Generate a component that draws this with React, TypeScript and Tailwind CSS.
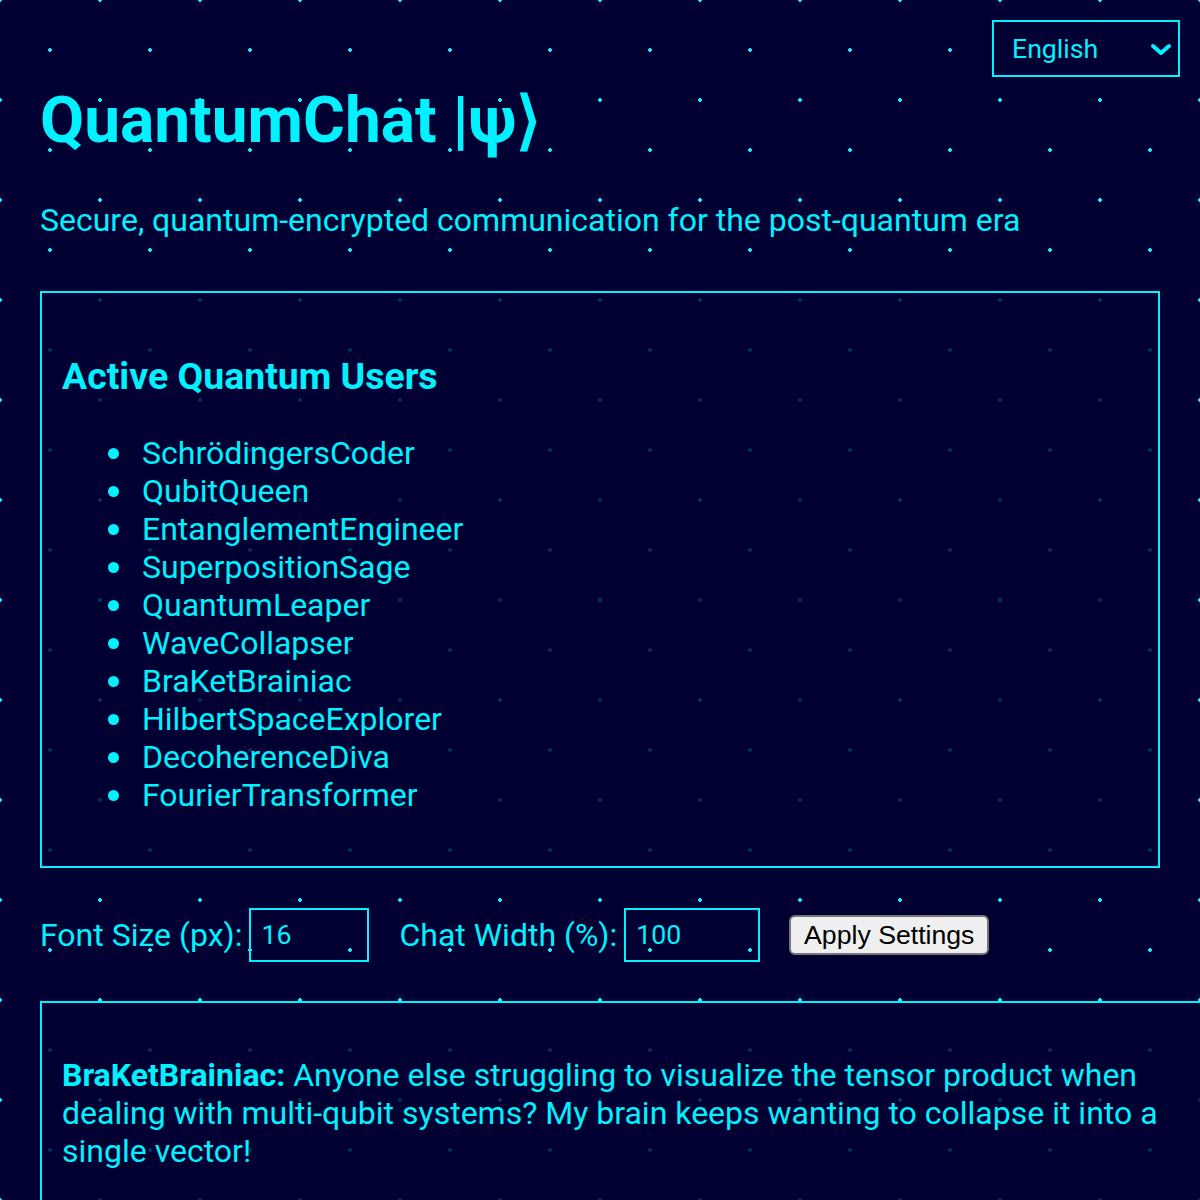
import React from 'react';

const users = [
  'SchrödingersCoder',
  'QubitQueen',
  'EntanglementEngineer',
  'SuperpositionSage',
  'QuantumLeaper',
  'WaveCollapser',
  'BraKetBrainiac',
  'HilbertSpaceExplorer',
  'DecoherenceDiva',
  'FourierTransformer',
];

export default function App() {
  return (
    <div className="relative min-h-screen overflow-x-hidden bg-[#000033] bg-[image:radial-gradient(circle,#18eaff_1.8px,transparent_2px),radial-gradient(circle,#18eaff_1.8px,transparent_2px)] bg-[size:100px_100px] bg-[position:0_0,50px_50px] px-[40px] pt-[40px] font-['Roboto',sans-serif] text-[#00f2ff]">
      {/* Language picker */}
      <div className="absolute right-[20px] top-[20px]">
        <div className="relative">
          <select className="h-[57px] w-[188px] appearance-none border-2 border-[#00f2ff] bg-[#000033] pl-[18px] text-[26.67px] text-[#00f2ff] outline-none">
            <option>English</option>
          </select>
          <svg
            className="pointer-events-none absolute right-[8px] top-[23px]"
            width="22"
            height="14"
            viewBox="0 0 22 14"
            fill="none"
          >
            <polyline points="3,3 11,10 19,3" stroke="#00f2ff" strokeWidth="4" strokeLinecap="round" strokeLinejoin="round" />
          </svg>
        </div>
      </div>

      {/* Header */}
      <h1 className="mt-[43px] text-[64px] font-bold leading-[75px]">QuantumChat |ψ⟩</h1>
      <p className="mt-[43px] text-[32px] leading-[38px]">
        Secure, quantum-encrypted communication for the post-quantum era
      </p>

      {/* Users panel */}
      <div className="mt-[52px] border-2 border-[#00f2ff] bg-[#000033]/80 p-[20px]">
        <h3 className="mt-[41px] text-[37.44px] font-bold leading-[44px]">Active Quantum Users</h3>
        <ul className="mb-[32px] mt-[36px] pl-[46px] text-[32px] leading-[38px]">
          {users.map((u) => (
            <li key={u} className="flex items-center">
              <span className="mr-[23px] h-[11px] w-[11px] rounded-full bg-[#00f2ff]" />
              {u}
            </li>
          ))}
        </ul>
      </div>

      {/* Settings */}
      <div className="mt-[40px] flex items-center text-[32px] leading-[38px]">
        <label className="flex items-center gap-[7px]">
          Font Size (px):
          <input
            defaultValue="16"
            className="h-[54px] w-[120px] border-2 border-[#00f2ff] bg-transparent px-[10px] text-[26.67px] text-[#00f2ff] outline-none"
          />
        </label>
        <label className="ml-[30px] flex items-center gap-[7px]">
          Chat Width (%):
          <input
            defaultValue="100"
            className="h-[54px] w-[136px] border-2 border-[#00f2ff] bg-transparent px-[10px] text-[26.67px] text-[#00f2ff] outline-none"
          />
        </label>
        <button className="ml-[29px] h-[40px] w-[200px] rounded-[6px] border-2 border-[#767676] bg-[#efefef] font-['Liberation_Sans',Arial,sans-serif] text-[26.67px] leading-none text-black">
          Apply Settings
        </button>
      </div>

      {/* Chat */}
      <div className="mt-[39px] w-[1184px] border-2 border-[#00f2ff] bg-[#000033]/80 px-[20px] pb-[20px] pt-[20px]">
        <p className="mb-[32px] mt-[33px] text-[32px] leading-[38px]">
          <strong className="font-bold">BraKetBrainiac:</strong> Anyone else struggling to visualize the tensor
          product when dealing with multi-qubit systems? My brain keeps wanting to collapse it into a single vector!
        </p>
      </div>
    </div>
  );
}
